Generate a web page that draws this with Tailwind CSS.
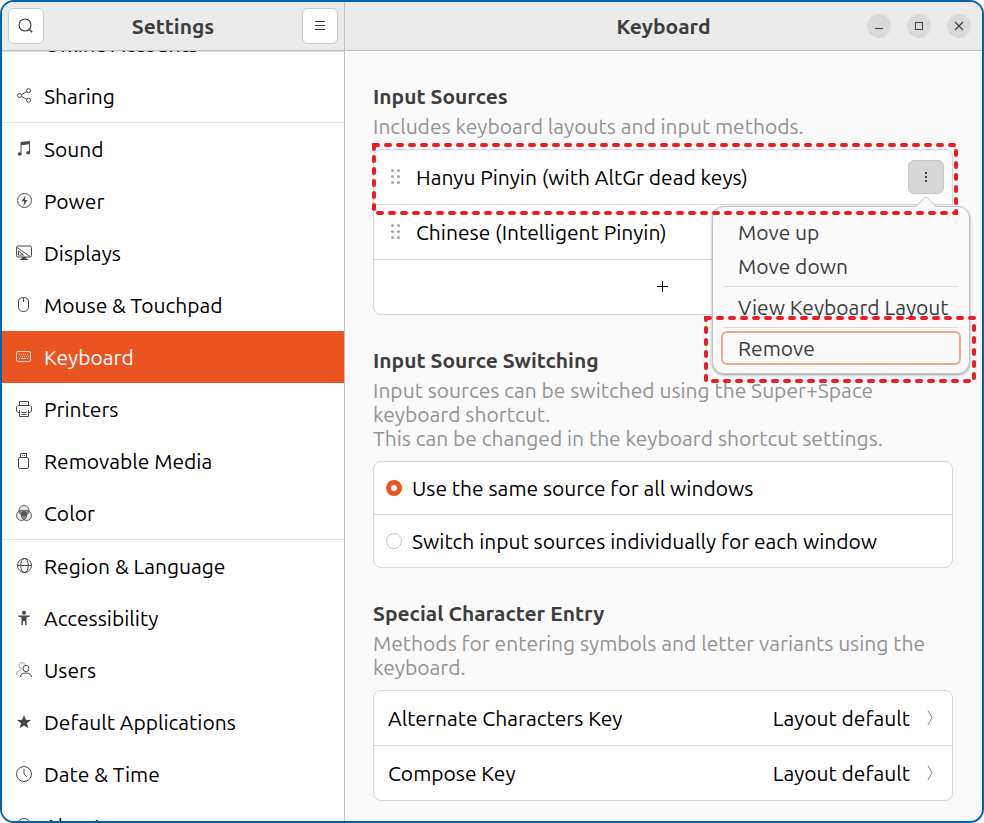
<!DOCTYPE html>
<html lang="en">
<head>
<meta charset="utf-8">
<title>Settings</title>
<script src="https://cdn.jsdelivr.net/npm/@tailwindcss/browser@4"></script>
</head>
<body class="bg-white font-['Ubuntu','Noto_Sans',sans-serif] text-[21px] leading-6 text-black">
<div class="flex h-screen overflow-hidden rounded-[14px] border-2 border-[#0063b1] bg-[#fafafa]">

  <aside class="flex w-[35%] max-w-[343px] shrink-0 flex-col border-r border-[#c3c3c3] bg-white">
    <header class="relative z-10 flex h-[49px] shrink-0 items-center justify-between border-b border-[#bdbdbd] bg-[#ebebeb] px-[6px] shadow-[0_1px_1px_rgba(0,0,0,0.12)]">
      <button aria-label="Search" class="flex size-9 items-center justify-center rounded-md border border-[#cbcbcb] bg-white text-[#3d3d3d]">
        <svg class="size-4" viewBox="0 0 16 16" fill="none" stroke="currentColor" stroke-width="1.1"><circle cx="7" cy="7" r="6"/><path d="M11.200 11.200l3 3" stroke-width="1.4"/></svg>
      </button>
      <h1 class="font-bold text-[#3d3d3d]">Settings</h1>
      <button aria-label="Menu" class="flex size-9 items-center justify-center rounded-md border border-[#cbcbcb] bg-white text-[#3d3d3d]">
        <svg class="size-4" viewBox="0 0 16 16" stroke="currentColor" stroke-width="1"><path d="M3 3.5h10M3 7.5h10M3 11.5h10"/></svg>
      </button>
    </header>
    <nav class="min-h-0 flex-1 overflow-hidden">
      <ul class="-mt-[33px] text-[#4a4a4a]">
        <li><a href="#" class="flex h-13 items-center gap-3 px-[14px]">
          <svg class="size-4 shrink-0" viewBox="0 0 16 16" fill="none" stroke="currentColor"><circle cx="8" cy="7" r="6"/></svg>
          <span class="text-black">Online Accounts</span></a></li>
        <li class="border-b border-[#e3e3e3]"><a href="#" class="flex h-13 items-center gap-3 px-[14px]">
          <svg class="size-4 shrink-0" viewBox="0 0 16 16" fill="none" stroke="currentColor"><circle cx="3.5" cy="7.5" r="2"/><circle cx="12.5" cy="2.7" r="2"/><circle cx="12.5" cy="12.3" r="2"/><path d="M5.3 6.6l5.4-2.9M5.3 8.4l5.4 2.9"/></svg>
          <span class="text-black">Sharing</span></a></li>
        <li><a href="#" class="flex h-13 items-center gap-3 px-[14px]">
          <svg class="size-4 shrink-0" viewBox="0 0 16 16" fill="currentColor"><path d="M4.500 1L14 0v11.500h-1V3.200L5.500 4.200V13h-1z"/><ellipse cx="3.700" cy="13" rx="2" ry="1.700"/><ellipse cx="12.200" cy="11.800" rx="2" ry="1.700"/></svg>
          <span class="text-black">Sound</span></a></li>
        <li><a href="#" class="flex h-13 items-center gap-3 px-[14px]">
          <svg class="size-4 shrink-0" viewBox="0 0 16 16"><circle cx="8.500" cy="7.500" r="7" fill="none" stroke="currentColor"/><path d="M9.500 2.500L5.500 8.300h2.600L7.500 13l4-6H9z" fill="currentColor"/></svg>
          <span class="text-black">Power</span></a></li>
        <li><a href="#" class="flex h-13 items-center gap-3 px-[14px]">
          <svg class="size-4 shrink-0" viewBox="0 0 16 16" fill="none" stroke="currentColor"><rect x=".5" y="1" width="15" height="11" rx="1.500"/><path d="M1 2.500l13 9M2.500 6v4h5z"/><path d="M6 12h4l.5 2H12v1H4v-1h1.500z" fill="currentColor" stroke="none"/></svg>
          <span class="text-black">Displays</span></a></li>
        <li><a href="#" class="flex h-13 items-center gap-3 px-[14px]">
          <svg class="size-4 shrink-0" viewBox="0 0 16 16" fill="none" stroke="currentColor"><path d="M2.500 5C2.500 2 4 .5 7.500.5S12.500 2 12.500 5v5c0 3-2 4.500-5 4.500s-5-1.500-5-4.500z"/><path d="M7.500 1v4"/></svg>
          <span class="text-black">Mouse &amp; Touchpad</span></a></li>
        <li><a href="#" aria-current="page" class="flex h-13 items-center gap-3 bg-[#e95420] px-[14px] text-[#fbd9cd]">
          <svg class="size-4 shrink-0" viewBox="0 0 16 16" fill="none" stroke="currentColor"><rect x=".5" y="2.500" width="14" height="10" rx="1.500"/><path d="M3 5.500h10M4 7.500h9" stroke-dasharray="1 1"/><path d="M3 9.500h1M5 9.500h5M11 9.500h1"/></svg>
          <span class="text-white">Keyboard</span></a></li>
        <li><a href="#" class="flex h-13 items-center gap-3 px-[14px]">
          <svg class="size-4 shrink-0" viewBox="0 0 16 16" fill="none" stroke="currentColor"><path d="M3.500 4V.5h9V4M3 11.500H2L.5 10V6L2 4.500h12L15.500 6v4L14 11.500h-1M3.500 9v6.500h9V9M5.500 11.500h5M5.500 13.500h5"/></svg>
          <span class="text-black">Printers</span></a></li>
        <li><a href="#" class="flex h-13 items-center gap-3 px-[14px]">
          <svg class="size-4 shrink-0" viewBox="0 0 16 16" fill="none" stroke="currentColor"><rect x="2.500" y="4.500" width="10" height="11" rx="1.500"/><path d="M4.500 4V.5h6V4M6 2.500h1M8 2.500h1"/></svg>
          <span class="text-black">Removable Media</span></a></li>
        <li class="border-b border-[#e3e3e3]"><a href="#" class="flex h-13 items-center gap-3 px-[14px]">
          <svg class="size-4 shrink-0" viewBox="0 0 16 16" fill="currentColor" fill-opacity=".12" stroke="currentColor" stroke-width=".9"><circle cx="8" cy="5.500" r="5"/><circle cx="5.500" cy="10.500" r="5"/><circle cx="10.500" cy="10.500" r="5"/><path d="M3.500 6.200C6 5 10 5 12.500 6.200 12 9 10.500 10.500 10 12l-2 2-2-2C5.500 10.500 4 9 3.500 6.200z" fill-opacity=".55" stroke="none"/><path d="M6 7.500h4L8 11z" fill-opacity="1" stroke="none"/></svg>
          <span class="text-black">Color</span></a></li>
        <li><a href="#" class="flex h-13 items-center gap-3 px-[14px]">
          <svg class="size-4 shrink-0" viewBox="0 0 16 16" fill="none" stroke="currentColor"><circle cx="8.500" cy="7.500" r="7"/><ellipse cx="8.500" cy="7.500" rx="3.800" ry="7"/><path d="M1.500 7.500h14"/></svg>
          <span class="text-black">Region &amp; Language</span></a></li>
        <li><a href="#" class="flex h-13 items-center gap-3 px-[14px]">
          <svg class="size-4 shrink-0" viewBox="0 0 16 16" fill="currentColor"><circle cx="8" cy="2.800" r="2"/><path d="M2 5.500h12v1L10.500 7.500V15H9v-4H7v4H5.500V7.500L2 6.500z"/></svg>
          <span class="text-black">Accessibility</span></a></li>
        <li><a href="#" class="flex h-13 items-center gap-3 px-[14px]">
          <svg class="size-4 shrink-0" viewBox="0 0 16 16" fill="none" stroke="currentColor"><g opacity=".5"><path d="M6.500 7C4 7 3 5.500 3 3.800 3 2 4.200.6 6 .6c1.500 0 2.600.8 2.900 2.200M.5 13c0-3 1.500-4.500 4.500-4.500"/></g><ellipse cx="10" cy="6.500" rx="2.900" ry="3.200"/><path d="M4.500 15c.3-3 2-4 5.500-4s5.200 1 5.500 4"/></svg>
          <span class="text-black">Users</span></a></li>
        <li><a href="#" class="flex h-13 items-center gap-3 px-[14px]">
          <svg class="size-4 shrink-0" viewBox="0 0 16 16" fill="currentColor"><path d="M8 1l1.900 4.800 5.100.3-4 3.200 1.400 4.900L8 11.400l-4.400 2.800L5 9.300 1 6.100l5.100-.3z"/></svg>
          <span class="text-black">Default Applications</span></a></li>
        <li><a href="#" class="flex h-13 items-center gap-3 px-[14px]">
          <svg class="size-4 shrink-0" viewBox="0 0 16 16" fill="none" stroke="currentColor"><circle cx="8" cy="8" r="7.500"/><path d="M8 3v5l3 3"/></svg>
          <span class="text-black">Date &amp; Time</span></a></li>
        <li><a href="#" class="flex h-13 items-center gap-3 px-[14px]">
          <svg class="size-4 shrink-0" viewBox="0 0 16 16" fill="none" stroke="currentColor"><circle cx="8" cy="8" r="7.500"/><path d="M8 7v5M8 4v1"/></svg>
          <span class="text-black">About</span></a></li>
      </ul>
    </nav>
  </aside>

  <div class="flex min-w-0 flex-1 flex-col">
    <header class="grid h-[49px] shrink-0 grid-cols-[1fr_auto_1fr] items-center border-b border-[#bdbdbd] bg-[#ebebeb] px-[11px]">
      <span></span>
      <h2 class="font-bold text-[#3d3d3d]">Keyboard</h2>
      <div class="flex justify-end gap-4 text-[#3d3d3d]">
        <button aria-label="Minimize" class="flex size-6 items-center justify-center rounded-full bg-[#dadada]"><svg class="size-4" viewBox="0 0 16 16" stroke="currentColor"><path d="M4 10.500h8"/></svg></button>
        <button aria-label="Maximize" class="flex size-6 items-center justify-center rounded-full bg-[#dadada]"><svg class="size-4" viewBox="0 0 16 16" fill="none" stroke="currentColor"><rect x="4.500" y="4.500" width="7" height="7"/></svg></button>
        <button aria-label="Close" class="flex size-6 items-center justify-center rounded-full bg-[#dadada]"><svg class="size-4" viewBox="0 0 16 16" stroke="currentColor" stroke-width="1.200"><path d="M4 4l8 8M12 4l-8 8"/></svg></button>
      </div>
    </header>

    <main class="flex min-h-0 flex-1 flex-col gap-[33px] overflow-hidden pt-[33px] pr-[29px] pl-7">
      <section>
        <h3 class="font-bold text-[#3d3d3d]">Input Sources</h3>
        <p class="mt-[6px] text-[#929292]">Includes keyboard layouts and input methods.</p>
        <div class="mt-[11px] rounded-lg border border-[#d6d6d6] bg-white">
          <div class="relative flex h-[55px] items-center border-b border-[#d6d6d6] pr-2 pl-[14px]">
            <svg class="mr-[12px] size-4 shrink-0" viewBox="0 0 16 16" fill="#a6a6a6"><circle cx="4.500" cy="1.500" r="1.500"/><circle cx="10.500" cy="1.500" r="1.500"/><circle cx="4.500" cy="7.500" r="1.500"/><circle cx="10.500" cy="7.500" r="1.500"/><circle cx="4.500" cy="13.500" r="1.500"/><circle cx="10.500" cy="13.500" r="1.500"/></svg>
            <span class="flex-1">Hanyu Pinyin (with AltGr dead keys)</span>
            <div class="relative">
              <button aria-label="Options" aria-expanded="true" class="flex h-[34px] w-9 items-center justify-center rounded-md border border-[#c6c6c6] bg-[#d6d6d6]">
                <svg class="size-4" viewBox="0 0 16 16" fill="#3d3d3d"><path d="M7 3h2v2H7zM7 7h2v2H7zM7 11h2v2H7z"/></svg>
              </button>
              <div role="menu" class="absolute top-[46px] -right-[26px] z-10 flex w-[258px] flex-col rounded-xl border border-[#c0c0c0] bg-[#fafafa] px-2 py-2 text-[#3d3d3d] shadow-[0_1px_3px_rgba(0,0,0,0.35)]">
                <svg class="absolute -top-3 right-[31px] h-3 w-6" viewBox="0 0 24 12"><path d="M1 12.500L12 1.500l11 11" fill="#fafafa" stroke="#c0c0c0"/></svg>
                <button role="menuitem" class="h-[34px] px-[17px] text-left">Move up</button>
                <button role="menuitem" class="h-[34px] px-[17px] text-left">Move down</button>
                <hr class="mx-[3px] my-[3px] border-[#dcdcdc]">
                <button role="menuitem" class="h-[34px] px-[17px] text-left whitespace-nowrap">View Keyboard Layout</button>
                <hr class="mx-[3px] my-[3px] border-[#dcdcdc]">
                <button role="menuitem" class="h-[34px] rounded-md border-2 border-[#f4a58a] px-[15px] text-left">Remove</button>
                <svg aria-hidden="true" class="pointer-events-none absolute top-[111px] -left-[7px] h-[63px] w-[268px] overflow-visible" fill="none" stroke="#ed1c24" stroke-width="4" stroke-linecap="round" stroke-dasharray="4 8"><rect width="100%" height="100%"/></svg>
              </div>
            </div>
            <svg aria-hidden="true" class="pointer-events-none absolute -top-[5px] left-0 z-20 h-[68px] w-[calc(100%+4px)] overflow-visible" fill="none" stroke="#ed1c24" stroke-width="4" stroke-linecap="round" stroke-dasharray="4 8"><rect width="100%" height="100%"/></svg>
          </div>
          <div class="flex h-[55px] items-center border-b border-[#d6d6d6] pr-2 pl-[14px]">
            <svg class="mr-[12px] size-4 shrink-0" viewBox="0 0 16 16" fill="#a6a6a6"><circle cx="4.500" cy="1.500" r="1.500"/><circle cx="10.500" cy="1.500" r="1.500"/><circle cx="4.500" cy="7.500" r="1.500"/><circle cx="10.500" cy="7.500" r="1.500"/><circle cx="4.500" cy="13.500" r="1.500"/><circle cx="10.500" cy="13.500" r="1.500"/></svg>
            <span>Chinese (Intelligent Pinyin)</span>
          </div>
          <button aria-label="Add input source" class="flex h-[54px] w-full items-center justify-center">
            <svg class="size-4" viewBox="0 0 16 16" stroke="#000"><path d="M2 7.500h11M7.500 2v11"/></svg>
          </button>
        </div>
      </section>

      <section>
        <h3 class="font-bold text-[#3d3d3d]">Input Source Switching</h3>
        <p class="mt-[6px] text-[#929292]">Input sources can be switched using the Super+Space keyboard shortcut.<br>This can be changed in the keyboard shortcut settings.</p>
        <div class="mt-[11px] rounded-lg border border-[#d6d6d6] bg-white">
          <label class="flex h-[53px] items-center gap-[10px] border-b border-[#d6d6d6] px-3">
            <input type="radio" name="switching" checked class="size-4 shrink-0 appearance-none rounded-full border border-[#c2c2c2] bg-white checked:border-[5px] checked:border-[#e95420]">
            Use the same source for all windows</label>
          <label class="flex h-[52px] items-center gap-[10px] px-3">
            <input type="radio" name="switching" class="size-4 shrink-0 appearance-none rounded-full border border-[#c2c2c2] bg-white checked:border-[5px] checked:border-[#e95420]">
            Switch input sources individually for each window</label>
        </div>
      </section>

      <section>
        <h3 class="font-bold text-[#3d3d3d]">Special Character Entry</h3>
        <p class="mt-[6px] text-[#929292]">Methods for entering symbols and letter variants using the keyboard.</p>
        <div class="mt-[11px] rounded-lg border border-[#d6d6d6] bg-white">
          <button class="flex h-[55px] w-full items-center border-b border-[#d6d6d6] px-[14px] text-left">
            <span class="flex-1">Alternate Characters Key</span><span>Layout default</span>
            <svg class="ml-3 size-4" viewBox="0 0 16 16" fill="none" stroke="#808080"><path d="M6 .5l4 7.200-4 7.200"/></svg></button>
          <button class="flex h-[54px] w-full items-center px-[14px] text-left">
            <span class="flex-1">Compose Key</span><span>Layout default</span>
            <svg class="ml-3 size-4" viewBox="0 0 16 16" fill="none" stroke="#808080"><path d="M6 .5l4 7.200-4 7.200"/></svg></button>
        </div>
      </section>
    </main>
  </div>
</div>
</body>
</html>
